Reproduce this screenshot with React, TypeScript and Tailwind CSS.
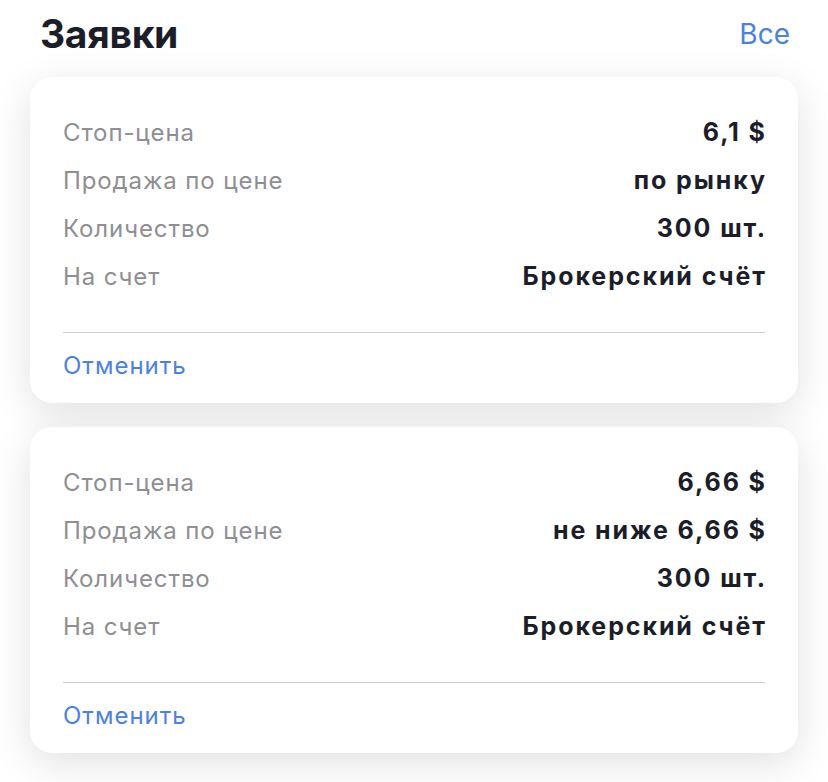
import React from 'react';

type Row = { label: string; value: string };

const orders: Row[][] = [
  [
    { label: 'Стоп-цена', value: '6,1 $' },
    { label: 'Продажа по цене', value: 'по рынку' },
    { label: 'Количество', value: '300 шт.' },
    { label: 'На счет', value: 'Брокерский счёт' },
  ],
  [
    { label: 'Стоп-цена', value: '6,66 $' },
    { label: 'Продажа по цене', value: 'не ниже 6,66 $' },
    { label: 'Количество', value: '300 шт.' },
    { label: 'На счет', value: 'Брокерский счёт' },
  ],
];

const OrderCard: React.FC<{ rows: Row[] }> = ({ rows }) => (
  <div className="bg-white rounded-[22px] shadow-[0_10px_40px_rgba(0,0,0,0.12)] px-[33px] pt-[32px]">
    <div className="flex flex-col">
      {rows.map((r) => (
        <div key={r.label} className="flex items-center justify-between h-[48px] text-[24px]">
          <span className="text-[#8e8e93] tracking-[0.9px]">{r.label}</span>
          <span className="font-bold text-[25px] text-[#1b1e29] tracking-[1.9px] -mr-[1.9px]">{r.value}</span>
        </div>
      ))}
    </div>
    <div className="mt-[31px] border-t border-[#cfcfd2]" />
    <div className="pt-[9px] pb-[13px]">
      <button className="h-[48px] text-[24px] text-[#4a82dc] tracking-[1px]">Отменить</button>
    </div>
  </div>
);

export default function App() {
  return (
    <div
      className="min-h-[782px] bg-white px-[30px] pb-[30px]"
      style={{ fontFamily: 'Inter, "Noto Sans", sans-serif' }}
    >
      <div className="flex items-center justify-between h-[68px] pl-[10px] pr-[8px] mb-[9px]">
        <h1 className="text-[39px] font-bold text-[#1b1e29] tracking-[-0.3px]">Заявки</h1>
        <button className="text-[28px] text-[#4a82dc]">Все</button>
      </div>
      <div className="flex flex-col gap-[24px]">
        {orders.map((rows, i) => (
          <OrderCard key={i} rows={rows} />
        ))}
      </div>
    </div>
  );
}
